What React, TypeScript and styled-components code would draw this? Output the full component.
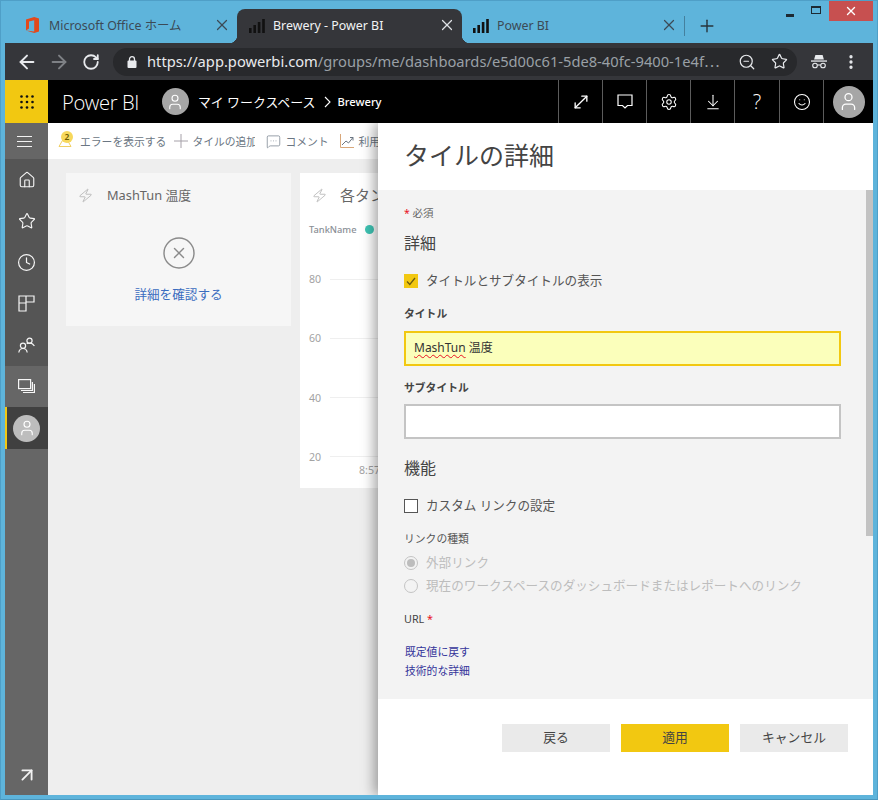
import React from 'react';
import styled, { createGlobalStyle } from 'styled-components';
import {
  ArrowLeft,
  ArrowRight,
  ArrowDownToLine,
  ArrowUpRight,
  CircleX,
  Clock,
  EllipsisVertical,
  Home,
  MessageSquareMore,
  MoveDiagonal,
  Plus,
  RotateCw,
  Settings,
  Smile,
  Star,
  User,
  X,
  Zap,
  ZoomOut,
} from 'lucide-react';

const UI_FONT = `"Noto Sans", "Noto Sans CJK JP", sans-serif`;
const YELLOW = '#f2c811';

const GlobalStyle = createGlobalStyle`
  html, body {
    margin: 0;
    padding: 0;
    background: #5eb4db;
    font-family: ${UI_FONT};
  }
  * {
    box-sizing: border-box;
  }
`;

const Window = styled.div`
  display: flex;
  flex-direction: column;
  width: 878px;
  height: 800px;
  background: #5eb4db;
  border: 1px solid #4f9fc7;
  border-bottom-color: #4a97bd;
  overflow: hidden;
`;

/* browser chrome */
const TabStrip = styled.div`
  display: flex;
  flex: none;
  height: 42px;
  padding: 0 4px;
`;

const Tab = styled.div<{ $width: number; $pad: number; $active?: boolean }>`
  position: relative;
  display: flex;
  align-items: center;
  align-self: flex-end;
  gap: 8px;
  width: ${(p) => p.$width}px;
  height: 34px;
  padding: 0 6px 2px ${(p) => p.$pad}px;
  font-size: 12.4px;
  color: ${(p) => (p.$active ? '#f1f3f4' : '#3c4a56')};
  background: ${(p) => (p.$active ? '#35363a' : 'transparent')};
  border-radius: 8px 8px 0 0;

  ${(p) =>
    p.$active &&
    `
    &::before, &::after {
      content: '';
      position: absolute;
      bottom: 0;
      width: 8px;
      height: 8px;
    }
    &::before {
      left: -8px;
      background: radial-gradient(circle at 0 0, transparent 8px, #35363a 8.5px);
    }
    &::after {
      right: -8px;
      background: radial-gradient(circle at 100% 0, transparent 8px, #35363a 8.5px);
    }
  `}
`;

const TabTitle = styled.span<{ $indent?: number }>`
  flex: 1;
  margin-left: ${(p) => p.$indent ?? 0}px;
  white-space: nowrap;
  overflow: hidden;
`;

const TabClose = styled(X)<{ $light?: boolean }>`
  flex: none;
  color: ${(p) => (p.$light ? '#dfe1e5' : '#3c4a56')};
`;

const TabSeparator = styled.div`
  align-self: flex-end;
  width: 1px;
  height: 20px;
  margin-bottom: 7px;
  background: #44809e;
`;

const NewTab = styled(Plus)`
  align-self: flex-end;
  margin: 0 0 7px 12px;
  color: #27343c;
`;

const WindowControls = styled.div`
  display: flex;
  align-items: flex-start;
  margin-left: auto;
`;

const ControlButton = styled.div<{ $width: number; $close?: boolean }>`
  display: flex;
  align-items: center;
  justify-content: center;
  width: ${(p) => p.$width}px;
  height: 20px;
  color: ${(p) => (p.$close ? '#fff' : '#1d2a33')};
  background: ${(p) => (p.$close ? '#c75050' : 'transparent')};
`;

const MinimizeGlyph = styled.div`
  width: 8px;
  height: 3px;
  margin-top: 8px;
  background: #1d2a33;
`;

const MaximizeGlyph = styled.div`
  width: 10px;
  height: 8px;
  margin-top: -3px;
  border: 1px solid #1d2a33;
  border-top-width: 2px;
`;

const Toolbar = styled.div`
  display: flex;
  flex: none;
  align-items: center;
  height: 37px;
  margin: 0 4px;
  padding-left: 6px;
  background: #35363a;
`;

const ToolButton = styled.div<{ $dim?: boolean; $push?: number }>`
  display: flex;
  flex: none;
  align-items: center;
  justify-content: center;
  width: 32px;
  height: 28px;
  margin-left: ${(p) => p.$push ?? 0}px;
  color: ${(p) => (p.$dim ? '#7e8185' : '#e8eaed')};
`;

const Omnibox = styled.div`
  display: flex;
  flex: none;
  align-items: center;
  width: 684px;
  height: 28px;
  margin-left: 6px;
  padding: 0 2px 0 14px;
  background: #28292c;
  border-radius: 14px;
`;

const UrlText = styled.div`
  flex: 1;
  margin-left: 10px;
  padding-bottom: 2px;
  font-size: 14.7px;
  color: #9aa0a6;
  white-space: nowrap;
  overflow: hidden;
`;

const UrlHost = styled.span`
  color: #e8eaed;
`;

/* power bi frame */
const AppFrame = styled.div`
  display: flex;
  flex: 1;
  flex-direction: column;
  min-height: 0;
  margin: 0 4px 4px;
`;

const AppHeader = styled.header`
  display: flex;
  flex: none;
  align-items: center;
  height: 43px;
  color: #fff;
  background: #000;
`;

const Waffle = styled.div`
  display: flex;
  align-items: center;
  justify-content: center;
  width: 43px;
  height: 43px;
  background: ${YELLOW};
`;

const Brand = styled.div`
  margin-left: 14px;
  font-family: "Open Sans", sans-serif;
  font-size: 20.2px;
  font-weight: 300;
  letter-spacing: -0.4px;
  white-space: nowrap;
`;

const Avatar = styled.div<{ $size: number; $bg?: string }>`
  display: flex;
  flex: none;
  align-items: center;
  justify-content: center;
  width: ${(p) => p.$size}px;
  height: ${(p) => p.$size}px;
  color: #fff;
  background: ${(p) => p.$bg ?? '#a6a6a6'};
  border-radius: 50%;
`;

const Breadcrumb = styled.nav`
  display: flex;
  align-items: center;
  margin-left: 23px;
  font-size: 12.9px;
  white-space: nowrap;
`;

const CrumbLabel = styled.span`
  margin-left: 9px;
`;

const CrumbCurrent = styled.span`
  margin-left: 6px;
  font-size: 11.2px;
  font-weight: 500;
`;

const CrumbArrow = styled.svg`
  margin-left: 9px;
`;

const HeaderActions = styled.div`
  display: flex;
  height: 100%;
  margin-left: auto;
`;

const HeaderButton = styled.div<{ $width?: number }>`
  display: flex;
  align-items: center;
  justify-content: center;
  width: ${(p) => p.$width ?? 44}px;
  border-left: 1px solid #5c5c5c;
`;

const HelpGlyph = styled.span`
  font-family: "Open Sans", sans-serif;
  font-size: 20px;
  font-weight: 300;
`;

const AppBody = styled.div`
  position: relative;
  display: flex;
  flex: 1;
  min-height: 0;
  overflow: hidden;
`;

const Sidebar = styled.aside`
  display: flex;
  flex: none;
  flex-direction: column;
  width: 43px;
  background: #666;
`;

const SideToggle = styled.div`
  display: flex;
  flex: none;
  align-items: center;
  height: 36px;
  padding-left: 12px;
  color: #f2f2f2;
`;

const SideItem = styled.div<{ $bg?: string; $current?: boolean }>`
  display: flex;
  flex: none;
  align-items: center;
  justify-content: center;
  height: 41.4px;
  padding-right: 2px;
  color: #f6f6f6;
  background: ${(p) => p.$bg ?? '#555'};
  border-left: 2px solid ${(p) => (p.$current ? YELLOW : 'transparent')};
`;

const SideFooter = styled.div`
  display: flex;
  justify-content: center;
  margin-top: auto;
  padding-bottom: 9px;
  color: #f2f2f2;
`;

const Main = styled.main`
  display: flex;
  flex: 1;
  flex-direction: column;
  min-width: 0;
`;

const CommandBar = styled.div`
  display: flex;
  flex: none;
  align-items: center;
  height: 36px;
  padding-left: 10px;
  background: #fff;
`;

const CommandItem = styled.div<{ $gap: number; $push?: number }>`
  position: relative;
  display: flex;
  flex: none;
  align-items: center;
  gap: ${(p) => p.$gap}px;
  margin-left: ${(p) => p.$push ?? 0}px;
  font-size: 10.8px;
  color: #6b7683;
  white-space: nowrap;
`;

const CommandClip = styled.span`
  display: block;
  width: 63px;
  overflow: hidden;
`;

const WarnBadge = styled.span`
  position: absolute;
  top: -2px;
  left: 3px;
  width: 12px;
  height: 12px;
  font-size: 8.5px;
  font-weight: 600;
  line-height: 12px;
  text-align: center;
  color: #6b5a00;
  background: #f7d85c;
  border-radius: 50%;
`;

const Canvas = styled.div`
  display: flex;
  flex: 1;
  align-items: flex-start;
  gap: 9px;
  min-height: 0;
  padding: 14px 18px;
  background: #eee;
`;

const ErrorCard = styled.section`
  display: flex;
  flex: none;
  flex-direction: column;
  align-items: center;
  width: 225px;
  height: 153px;
  padding-top: 13px;
  background: #f6f6f6;
`;

const CardHeader = styled.div<{ $indent: number; $gap: number }>`
  display: flex;
  align-items: center;
  align-self: stretch;
  gap: ${(p) => p.$gap}px;
  padding-left: ${(p) => p.$indent}px;
  color: #aaa;
`;

const TileTitle = styled.span<{ $size: number }>`
  font-size: ${(p) => p.$size}px;
  line-height: 18px;
  color: #666;
  white-space: nowrap;
`;

const ErrorIcon = styled(CircleX)`
  flex: none;
  margin-top: 31px;
  color: #8a8a8a;
`;

const DetailLink = styled.a`
  margin-top: 15px;
  font-size: 12.6px;
  line-height: 18px;
  color: #3a6cbf;
`;

const ChartCard = styled.section`
  display: flex;
  flex: none;
  flex-direction: column;
  width: 470px;
  height: 315px;
  padding: 13px 9px 0;
  background: #fff;
`;

const Legend = styled.div`
  display: flex;
  align-items: center;
  height: 12px;
  margin-top: 19px;
  font-size: 9.3px;
  font-weight: 500;
  color: #8a8f96;
`;

const LegendDot = styled.span`
  width: 9px;
  height: 9px;
  margin-left: 8px;
  background: #3fc4b4;
  border-radius: 50%;
`;

const ChartRows = styled.div`
  display: flex;
  flex-direction: column;
  gap: 45.3px;
  margin-top: 37px;
`;

const ChartRow = styled.div`
  display: flex;
  align-items: center;
  gap: 9px;
  height: 14px;
  font-size: 10.6px;
  color: #a3a3a3;
`;

const GridLine = styled.div`
  flex: 1;
  height: 1px;
  background: #efefef;
`;

const TimeLabel = styled.div`
  margin: -1px 0 0 50px;
  font-size: 10.6px;
  line-height: 14px;
  color: #a3a3a3;
`;

/* slide-in panel */
const Panel = styled.aside`
  position: absolute;
  top: 0;
  right: 0;
  bottom: 0;
  display: flex;
  flex-direction: column;
  width: 495px;
  background: #fff;
  box-shadow: -4px 0 12px rgba(0, 0, 0, 0.35);
`;

const PanelHeader = styled.header`
  display: flex;
  flex: none;
  align-items: center;
  height: 67px;
  padding: 0 26px 5px;
  font-size: 25px;
  color: #444;
`;

const PanelBody = styled.div`
  display: flex;
  flex: 1;
  min-height: 0;
  background: #f3f3f3;
`;

const FormColumn = styled.form`
  display: flex;
  flex: 1;
  flex-direction: column;
  min-width: 0;
  padding: 15px 25px 0 26px;
`;

const ScrollThumb = styled.div`
  flex: none;
  width: 7px;
  height: 346px;
  background: #c2c2c2;
`;

const Required = styled.div`
  height: 16px;
  font-size: 10.5px;
  line-height: 16px;
  color: #666;
`;

const Asterisk = styled.span`
  color: #e81123;
`;

const SectionTitle = styled.h3<{ $mt: number }>`
  height: 20px;
  margin: ${(p) => p.$mt}px 0 0;
  font-size: 16px;
  font-weight: 400;
  line-height: 20px;
  color: #444;
`;

const CheckRow = styled.label<{ $mt: number }>`
  display: flex;
  align-items: center;
  gap: 8px;
  height: 16px;
  margin-top: ${(p) => p.$mt}px;
  font-size: 12.6px;
  line-height: 16px;
  color: #555;
`;

const CheckBox = styled.span<{ $checked?: boolean }>`
  display: flex;
  flex: none;
  align-items: center;
  justify-content: center;
  width: 14px;
  height: 14px;
  color: #6b5c10;
  background: ${(p) => (p.$checked ? YELLOW : '#fff')};
  border: ${(p) => (p.$checked ? 'none' : '1px solid #555')};
`;

const FieldLabel = styled.label<{ $mt: number }>`
  display: block;
  height: 16px;
  margin-top: ${(p) => p.$mt}px;
  font-size: 10.8px;
  font-weight: 700;
  line-height: 16px;
  color: #444;
`;

const TitleBox = styled.div<{ $mt: number; $active?: boolean }>`
  display: flex;
  align-items: center;
  height: 35px;
  margin-top: ${(p) => p.$mt}px;
  padding: 0 8px 3px;
  font-size: 12px;
  color: #333;
  background: ${(p) => (p.$active ? '#fbffbb' : '#fff')};
  border: 2px solid ${(p) => (p.$active ? YELLOW : '#c4c4c4')};
`;

const Misspelled = styled.span`
  text-decoration: underline wavy #e81123 1px;
  text-underline-offset: 2px;
`;

const PlainLabel = styled.div<{ $mt: number }>`
  height: 16px;
  margin-top: ${(p) => p.$mt}px;
  font-size: 10.8px;
  line-height: 16px;
  color: #555;
`;

const RadioRow = styled.div<{ $mt: number }>`
  display: flex;
  align-items: center;
  gap: 8px;
  height: 16px;
  margin-top: ${(p) => p.$mt}px;
  font-size: 12.6px;
  line-height: 16px;
  color: #bdbdbd;
  white-space: nowrap;
`;

const Radio = styled.span<{ $checked?: boolean }>`
  display: flex;
  flex: none;
  align-items: center;
  justify-content: center;
  width: 14px;
  height: 14px;
  border: 1px solid #c4c4c4;
  border-radius: 50%;

  &::after {
    content: '';
    display: ${(p) => (p.$checked ? 'block' : 'none')};
    width: 8px;
    height: 8px;
    background: #bdbdbd;
    border-radius: 50%;
  }
`;

const UrlLabel = styled.div`
  height: 16px;
  margin-top: 17px;
  font-size: 10.8px;
  line-height: 16px;
  color: #444;
`;

const TextLink = styled.a<{ $mt: number }>`
  display: block;
  height: 16px;
  margin: ${(p) => p.$mt}px 0 0 1px;
  font-size: 10.8px;
  line-height: 16px;
  color: #34349a;
`;

const PanelFooter = styled.footer`
  display: flex;
  flex: none;
  justify-content: flex-end;
  gap: 11px;
  height: 96px;
  padding: 25px 25px 0 0;
`;

const FooterButton = styled.button<{ $primary?: boolean }>`
  width: 108px;
  height: 28px;
  padding: 0 0 3px;
  font-family: inherit;
  font-size: 12.8px;
  color: #444;
  background: ${(p) => (p.$primary ? YELLOW : '#eaeaea')};
  border: none;
`;

/* drawn icons */
const OfficeLogo = () => (
  <svg width="13" height="16" viewBox="0 0 13 16">
    <path d="M0 2.6 8.2 0 13 1.4v13.2L8.2 16 0 13.4l8.2 1.1V3.3L3 4.4v7.2L0 13.4z" fill="#e3491b" />
  </svg>
);

const BarsIcon = () => (
  <svg width="16" height="15" viewBox="0 0 16 15" fill="#111">
    <rect x="0" y="10" width="2.6" height="5" />
    <rect x="4.4" y="7" width="2.6" height="8" />
    <rect x="8.8" y="4" width="2.6" height="11" />
    <rect x="13.2" y="1" width="2.6" height="14" />
  </svg>
);

const LockIcon = () => (
  <svg width="10" height="12" viewBox="0 0 10 12" fill="none">
    <rect x="0.5" y="4.5" width="9" height="7.5" rx="1" fill="#e8eaed" />
    <path d="M2.5 5V3.2a2.5 2.5 0 0 1 5 0V5" stroke="#e8eaed" strokeWidth="1.3" />
  </svg>
);

const IncognitoIcon = () => (
  <svg width="16" height="15" viewBox="0 0 16 15" fill="none">
    <path d="M4.4 1h7.2l1.3 4.4H3.1z" fill="#e8eaed" />
    <rect x="0" y="6.4" width="16" height="1.3" fill="#e8eaed" />
    <circle cx="4" cy="11.5" r="2.3" stroke="#e8eaed" strokeWidth="1.1" />
    <circle cx="12" cy="11.5" r="2.3" stroke="#e8eaed" strokeWidth="1.1" />
    <path d="M6.3 11h3.4" stroke="#e8eaed" strokeWidth="1.1" />
  </svg>
);

const WaffleIcon = () => (
  <svg width="14" height="14" viewBox="0 0 14 14" fill="#111">
    {[1.5, 7, 12.5].map((y) =>
      [1.5, 7, 12.5].map((x) => <circle key={`${x}-${y}`} cx={x} cy={y} r="1.3" />),
    )}
  </svg>
);

const HamburgerIcon = () => (
  <svg width="15" height="11" viewBox="0 0 15 11" stroke="currentColor" strokeWidth="1">
    <path d="M0 .5h15M0 5.5h15M0 10.5h15" />
  </svg>
);

const CommentBubble = () => (
  <svg width="16" height="15" viewBox="0 0 16 15" fill="none" stroke="#fff" strokeWidth="1.2">
    <path d="M1 1h14v10.5h-4.5L8 14l-2.5-2.5H1z" />
  </svg>
);

const WarnIcon = () => (
  <svg width="14" height="12" viewBox="0 0 14 12" fill="none" stroke="#f0cf63" strokeWidth="1">
    <path d="M7 1 13 11.5H1z" />
  </svg>
);

const ThinPlus = () => (
  <svg width="14" height="14" viewBox="0 0 14 14" stroke="#a5a0a8" strokeWidth="1">
    <path d="M7 0v14M0 7h14" />
  </svg>
);

const TrendIcon = () => (
  <svg width="14" height="14" viewBox="0 0 14 14" fill="none" strokeWidth="1">
    <path d="M.5 0v13.5H14" stroke="#d8a77a" />
    <path d="M2 11l4-4 2.5 2L13 3.5M10 3.5h3v3" stroke="#6b7683" />
  </svg>
);

const DashboardIcon = () => (
  <svg width="17" height="17" viewBox="0 0 17 17" fill="none" stroke="currentColor" strokeWidth="1.2">
    <path d="M1 1h7v7H1zM8 1h8v6H8M8 8v8H1V8" />
  </svg>
);

const SharedIcon = () => (
  <svg width="17" height="17" viewBox="0 0 17 17" fill="none" stroke="currentColor" strokeWidth="1.2">
    <circle cx="11.5" cy="3.8" r="2.6" />
    <path d="M8.7 6.6c2-1 5.5-1 7.7 2.4" />
    <circle cx="5" cy="8.8" r="2.6" />
    <path d="M.8 15.5c.4-2.8 2-4 4.2-4s3.8 1.2 4.2 4" />
  </svg>
);

const WorkspacesIcon = () => (
  <svg width="17" height="15" viewBox="0 0 17 15" fill="none" stroke="currentColor" strokeWidth="1.2">
    <rect x="0.6" y="0.6" width="12" height="9" />
    <path d="M14.4 3v8.5H3M16.4 5v8.5H5" />
  </svg>
);

const BoltGlyph = styled(Zap)`
  flex: none;
  transform: skewX(-12deg);
`;

export default function App(): JSX.Element {
  return (
    <>
      <GlobalStyle />
      <Window>
        <TabStrip>
          <Tab $width={232} $pad={21}>
            <OfficeLogo />
            <TabTitle $indent={2}>Microsoft Office ホーム</TabTitle>
            <TabClose size={18} strokeWidth={1.6} />
          </Tab>
          <Tab $width={225} $pad={12} $active>
            <BarsIcon />
            <TabTitle>Brewery - Power BI</TabTitle>
            <TabClose size={18} strokeWidth={1.6} $light />
          </Tab>
          <Tab $width={222} $pad={11}>
            <BarsIcon />
            <TabTitle>Power BI</TabTitle>
            <TabClose size={18} strokeWidth={1.6} />
          </Tab>
          <TabSeparator />
          <NewTab size={20} strokeWidth={1.7} />
          <WindowControls>
            <ControlButton $width={26}>
              <MinimizeGlyph />
            </ControlButton>
            <ControlButton $width={26}>
              <MaximizeGlyph />
            </ControlButton>
            <ControlButton $width={44} $close>
              <X size={14} strokeWidth={2.4} />
            </ControlButton>
          </WindowControls>
        </TabStrip>

        <Toolbar>
          <ToolButton>
            <ArrowLeft size={22} strokeWidth={2.1} />
          </ToolButton>
          <ToolButton $dim>
            <ArrowRight size={22} strokeWidth={2.1} />
          </ToolButton>
          <ToolButton>
            <RotateCw size={18} strokeWidth={2.4} />
          </ToolButton>
          <Omnibox>
            <LockIcon />
            <UrlText>
              <UrlHost>https://app.powerbi.com</UrlHost>/groups/me/dashboards/e5d00c61-5de8-40fc-9400-1e4f⋯
            </UrlText>
            <ToolButton>
              <ZoomOut size={18} strokeWidth={1.6} />
            </ToolButton>
            <ToolButton>
              <Star size={17} strokeWidth={1.7} />
            </ToolButton>
          </Omnibox>
          <ToolButton $push={6}>
            <IncognitoIcon />
          </ToolButton>
          <ToolButton>
            <EllipsisVertical size={18} strokeWidth={2.4} />
          </ToolButton>
        </Toolbar>

        <AppFrame>
          <AppHeader>
            <Waffle>
              <WaffleIcon />
            </Waffle>
            <Brand>Power BI</Brand>
            <Breadcrumb>
              <Avatar $size={27}>
                <User size={18} strokeWidth={1.5} />
              </Avatar>
              <CrumbLabel>マイ ワークスペース</CrumbLabel>
              <CrumbArrow width="7" height="12" viewBox="0 0 7 12" fill="none" stroke="#fff" strokeWidth="1.1">
                <path d="M1 1l5 5-5 5" />
              </CrumbArrow>
              <CrumbCurrent>Brewery</CrumbCurrent>
            </Breadcrumb>
            <HeaderActions>
              <HeaderButton>
                <MoveDiagonal size={20} strokeWidth={1.6} />
              </HeaderButton>
              <HeaderButton>
                <CommentBubble />
              </HeaderButton>
              <HeaderButton>
                <Settings size={18} strokeWidth={1.4} />
              </HeaderButton>
              <HeaderButton>
                <ArrowDownToLine size={18} strokeWidth={1.4} />
              </HeaderButton>
              <HeaderButton $width={45}>
                <HelpGlyph>?</HelpGlyph>
              </HeaderButton>
              <HeaderButton>
                <Smile size={18} strokeWidth={1.4} />
              </HeaderButton>
              <HeaderButton $width={50}>
                <Avatar $size={32}>
                  <User size={21} strokeWidth={1.5} />
                </Avatar>
              </HeaderButton>
            </HeaderActions>
          </AppHeader>

          <AppBody>
            <Sidebar>
              <SideToggle>
                <HamburgerIcon />
              </SideToggle>
              <SideItem>
                <Home size={18} strokeWidth={1.5} />
              </SideItem>
              <SideItem>
                <Star size={18} strokeWidth={1.5} />
              </SideItem>
              <SideItem>
                <Clock size={19} strokeWidth={1.5} />
              </SideItem>
              <SideItem>
                <DashboardIcon />
              </SideItem>
              <SideItem>
                <SharedIcon />
              </SideItem>
              <SideItem $bg="#666">
                <WorkspacesIcon />
              </SideItem>
              <SideItem $bg="#404040" $current>
                <Avatar $size={27} $bg="#bdbdbd">
                  <User size={18} strokeWidth={1.5} />
                </Avatar>
              </SideItem>
              <SideFooter>
                <ArrowUpRight size={22} strokeWidth={2} />
              </SideFooter>
            </Sidebar>

            <Main>
              <CommandBar>
                <CommandItem $gap={8}>
                  <WarnIcon />
                  <WarnBadge>2</WarnBadge>
                  エラーを表示する
                </CommandItem>
                <CommandItem $gap={4} $push={8}>
                  <ThinPlus />
                  <CommandClip>タイルの追加</CommandClip>
                </CommandItem>
                <CommandItem $gap={4} $push={11}>
                  <MessageSquareMore size={15} strokeWidth={1.1} />
                  コメント
                </CommandItem>
                <CommandItem $gap={5} $push={11}>
                  <TrendIcon />
                  利用状況
                </CommandItem>
              </CommandBar>
              <Canvas>
                <ErrorCard>
                  <CardHeader $indent={12} $gap={14}>
                    <BoltGlyph size={15} strokeWidth={1.1} />
                    <TileTitle $size={12.8}>MashTun 温度</TileTitle>
                  </CardHeader>
                  <ErrorIcon size={36} strokeWidth={0.95} />
                  <DetailLink>詳細を確認する</DetailLink>
                </ErrorCard>
                <ChartCard>
                  <CardHeader $indent={3} $gap={13}>
                    <BoltGlyph size={15} strokeWidth={1.1} />
                    <TileTitle $size={15}>各タンク</TileTitle>
                  </CardHeader>
                  <Legend>
                    TankName
                    <LegendDot />
                  </Legend>
                  <ChartRows>
                    {[80, 60, 40, 20].map((tick) => (
                      <ChartRow key={tick}>
                        {tick}
                        <GridLine />
                      </ChartRow>
                    ))}
                  </ChartRows>
                  <TimeLabel>8:57:00</TimeLabel>
                </ChartCard>
              </Canvas>
            </Main>

            <Panel>
              <PanelHeader>タイルの詳細</PanelHeader>
              <PanelBody>
                <FormColumn>
                  <Required>
                    <Asterisk>*</Asterisk> 必須
                  </Required>
                  <SectionTitle $mt={12}>詳細</SectionTitle>
                  <CheckRow $mt={20}>
                    <CheckBox $checked>
                      <svg width="10" height="9" viewBox="0 0 10 9" fill="none" stroke="currentColor" strokeWidth="1.3">
                        <path d="M1 4.5 3.8 7.5 9 1" />
                      </svg>
                    </CheckBox>
                    タイトルとサブタイトルの表示
                  </CheckRow>
                  <FieldLabel $mt={17}>タイトル</FieldLabel>
                  <TitleBox $mt={9} $active>
                    <Misspelled>MashTun</Misspelled>&nbsp;温度
                  </TitleBox>
                  <FieldLabel $mt={14}>サブタイトル</FieldLabel>
                  <TitleBox $mt={8} />
                  <SectionTitle $mt={19}>機能</SectionTitle>
                  <CheckRow $mt={20}>
                    <CheckBox />
                    カスタム リンクの設定
                  </CheckRow>
                  <PlainLabel $mt={17}>リンクの種類</PlainLabel>
                  <RadioRow $mt={8}>
                    <Radio $checked />
                    外部リンク
                  </RadioRow>
                  <RadioRow $mt={7}>
                    <Radio />
                    現在のワークスペースのダッシュボードまたはレポートへのリンク
                  </RadioRow>
                  <UrlLabel>
                    URL <Asterisk>*</Asterisk>
                  </UrlLabel>
                  <TextLink $mt={17}>既定値に戻す</TextLink>
                  <TextLink $mt={3}>技術的な詳細</TextLink>
                </FormColumn>
                <ScrollThumb />
              </PanelBody>
              <PanelFooter>
                <FooterButton type="button">戻る</FooterButton>
                <FooterButton type="button" $primary>
                  適用
                </FooterButton>
                <FooterButton type="button">キャンセル</FooterButton>
              </PanelFooter>
            </Panel>
          </AppBody>
        </AppFrame>
      </Window>
    </>
  );
}
